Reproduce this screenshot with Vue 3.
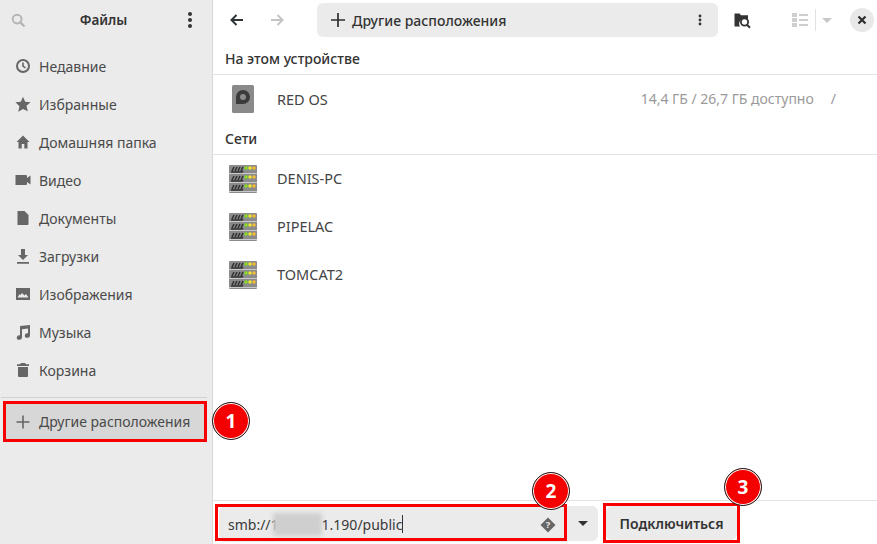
<script setup>
const places = [
  { name: 'Недавние', icon: 'clock' },
  { name: 'Избранные', icon: 'star' },
  { name: 'Домашняя папка', icon: 'home' },
  { name: 'Видео', icon: 'video' },
  { name: 'Документы', icon: 'doc' },
  { name: 'Загрузки', icon: 'down' },
  { name: 'Изображения', icon: 'image' },
  { name: 'Музыка', icon: 'music' },
  { name: 'Корзина', icon: 'trash' },
]
const servers = ['DENIS-PC', 'PIPELAC', 'TOMCAT2']
const bars = [0, 9, 18]
</script>

<template>
  <div class="win">
    <aside class="side">
      <div class="side-head">
        <svg class="s-search" width="15" height="15" viewBox="0 0 16 16"><circle cx="6.5" cy="6.5" r="4.7" fill="none" stroke="#b4b4b4" stroke-width="2"/><path d="M10 10l4.400 4.400" stroke="#b4b4b4" stroke-width="2.400"/></svg>
        <span class="side-title">Файлы</span>
        <svg class="s-menu" width="6" height="18" viewBox="0 0 6 18"><circle cx="3" cy="3" r="2" fill="#333"/><circle cx="3" cy="9" r="2" fill="#333"/><circle cx="3" cy="15" r="2" fill="#333"/></svg>
      </div>
      <ul class="places">
        <li v-for="p in places" :key="p.name" class="place">
          <svg class="ico" width="16" height="16" viewBox="0 0 16 16">
            <template v-if="p.icon === 'clock'"><circle cx="8" cy="8" r="6" fill="none" stroke="#666" stroke-width="2"/><path d="M8 4.500V8l2.500 2" fill="none" stroke="#666" stroke-width="1.600"/></template>
            <path v-else-if="p.icon === 'star'" d="M8 .8l2.200 5 5.400.5-4.100 3.500 1.300 5.400L8 12.900 3.200 15.700l1.300-5.400L.4 6.300l5.400-.5z" fill="#666"/>
            <path v-else-if="p.icon === 'home'" d="M8 1.500L1.500 8H3.500v6.500h3.200V10h2.600v4.500h3.200V8h2z" fill="#666"/>
            <path v-else-if="p.icon === 'video'" d="M0.500 3h10.500a1 1 0 0 1 1 1v2l3.500-2.500v9L12 10v2a1 1 0 0 1-1 1H0.500z" fill="#666"/>
            <path v-else-if="p.icon === 'doc'" d="M2.500 1h7l4 4v9a1 1 0 0 1-1 1h-10z" fill="#666"/>
            <path v-else-if="p.icon === 'down'" d="M6 1h4v6h3l-5 5-5-5h3zM2 14h12v1.700H2z" fill="#666"/>
            <path v-else-if="p.icon === 'image'" fill-rule="evenodd" d="M1 2h14v12H1zM2.500 11.500h11L11 8 9.500 9.500 7 7 5.500 9 4.500 8.200z" fill="#666"/>
            <path v-else-if="p.icon === 'music'" d="M5 2l10-1v10.500a2.600 2.300 0 1 1-2-2.200V4.500L7 5.200v8.300a2.600 2.300 0 1 1-2-2.200z" fill="#666"/>
            <path v-else d="M6 1h4l1 1.300h3V4H2V2.300h3zM3 5h10v9a1 1 0 0 1-1 1H4a1 1 0 0 1-1-1z" fill="#666"/>
          </svg>
          <span>{{ p.name }}</span>
        </li>
      </ul>
      <div class="side-sep"></div>
      <div class="place other">
        <svg class="ico" width="16" height="16" viewBox="0 0 16 16"><path d="M8 1.500v13M1.500 8h13" stroke="#666" stroke-width="1.600"/></svg>
        <span class="other-text">Другие расположения</span>
        <b class="mark red-box box-other"></b>
        <b class="num n1">1</b>
      </div>
    </aside>

    <main class="main">
      <header class="top">
        <svg class="arrow" width="16" height="16" viewBox="0 0 16 16"><path d="M14 8H3M7.500 3L2.500 8l5 5" fill="none" stroke="#2e3436" stroke-width="2"/></svg>
        <svg class="arrow fwd" width="16" height="16" viewBox="0 0 16 16"><path d="M2 8h11M8.500 3l5 5-5 5" fill="none" stroke="#c4c4c4" stroke-width="2"/></svg>
        <div class="path">
          <svg width="16" height="16" viewBox="0 0 16 16"><path d="M8 1v14M1 8h14" stroke="#2e2e2e" stroke-width="1.700"/></svg>
          <span class="path-text">Другие расположения</span>
          <svg class="path-menu" width="4" height="12" viewBox="0 0 4 12"><circle cx="2" cy="2" r="1.400" fill="#333"/><circle cx="2" cy="6" r="1.400" fill="#333"/><circle cx="2" cy="10" r="1.400" fill="#333"/></svg>
        </div>
        <svg class="find" width="17" height="17" viewBox="0 0 17 17"><path d="M0.500 1.500h5l1.500 1.800h7v4a5.500 5.500 0 0 0-8 7.200H.5z" fill="#333"/><circle cx="10.500" cy="10" r="3.600" fill="none" stroke="#333" stroke-width="1.800"/><path d="M13 12.700l3 3" stroke="#333" stroke-width="2"/></svg>
        <svg class="list" width="16" height="14" viewBox="0 0 16 14"><path d="M0 0h5v4H0zM0 5h5v4H0zM0 10h5v4H0zM7 1h9v2H7zM7 6h9v2H7zM7 11h9v2H7z" fill="#cfcfcf"/></svg>
        <i class="v-sep"></i>
        <svg class="drop" width="10" height="5" viewBox="0 0 10 5"><path d="M0 0h10L5 5z" fill="#c8c8c8"/></svg>
        <span class="close"><svg width="10" height="10" viewBox="0 0 10 10"><path d="M1.500 1.500l7 7M8.500 1.500l-7 7" stroke="#2e2e2e" stroke-width="2.200"/></svg></span>
      </header>

      <div class="content">
        <h2 class="sec first">На этом устройстве</h2>
        <div class="row device">
          <svg class="dev-ico" width="22" height="28" viewBox="0 0 22 28">
            <rect x="0" y="0" width="22" height="28" rx="1.500" fill="#8a8a8a"/>
            <path d="M4 12a7 7 0 1 1 7 7H4z" fill="#3b3b3b"/>
            <circle cx="11" cy="12" r="3" fill="#8c8c8c"/>
          </svg>
          <span class="name">RED OS</span>
          <span class="free">14,4 ГБ / 26,7 ГБ доступно</span>
          <span class="mount">/</span>
        </div>
        <h2 class="sec">Сети</h2>
        <div v-for="s in servers" :key="s" class="row server">
          <svg class="srv-ico" width="28" height="28" viewBox="0 0 28 28">
            <rect width="28" height="28" rx="1" fill="#8b8b8b"/>
            <g v-for="y in bars" :key="y">
              <path :d="`M2 ${y + 7}h11l1-1M3 ${y + 6}l2-4M6 ${y + 6}l2-4M9 ${y + 6}l2-4M12 ${y + 6}l2-4`" fill="none" stroke="#333" stroke-width="1.600"/>
              <circle cx="17" :cy="y + 3" r="1.700" fill="#86e01e"/>
              <circle cx="21" :cy="y + 3" r="1.700" fill="#f0ea2e"/>
              <circle cx="25" :cy="y + 3" r="1.700" fill="#f5bb32"/>
              <path :d="`M0 ${y + 8.500}h28`" stroke="#c9c9c9" stroke-width="1"/>
            </g>
          </svg>
          <span class="name">{{ s }}</span>
        </div>
      </div>

      <footer class="bottom">
        <div class="entry">
          <span class="smb">smb://1</span><span class="blur"></span><span class="smb">1.190/public</span><i class="caret"></i>
          <svg class="hint" width="16" height="16" viewBox="0 0 17 17"><path d="M8.500 0.500l8 8-8 8-8-8z" fill="#666"/><text x="8.500" y="12" text-anchor="middle" class="q">?</text></svg>
          <b class="mark red-box box-entry"></b>
          <b class="num n2">2</b>
        </div>
        <div class="more"><svg width="10" height="5" viewBox="0 0 10 5"><path d="M0 0h10L5 5z" fill="#333"/></svg></div>
        <button class="connect">Подключиться<b class="mark red-box box-btn"></b><b class="num n3">3</b></button>
      </footer>
    </main>
  </div>
</template>

<style>
html, body { margin: 0; background: #fff; }
</style>

<style scoped>
.win { width: 877px; height: 544px; display: flex; overflow: hidden; background: #fff; font-family: "Noto Sans", "Open Sans", sans-serif; font-size: 14px; color: #3a3a3a; }
.side { width: 212px; flex: none; background: #ebebeb; border-right: 1px solid #d8d8d8; display: flex; flex-direction: column; }
.side-head { height: 38px; display: flex; align-items: center; justify-content: center; position: relative; padding: 2px 5px 0 0; box-sizing: border-box; }
.side-title { font-weight: 600; font-size: 13.500px; color: #333; }
.s-search { position: absolute; left: 11px; top: 13px; }
.s-menu { position: absolute; left: 187px; top: 11px; }
.places { list-style: none; margin: 9px 0 0; padding: 0; }
.place { height: 38px; display: flex; align-items: center; gap: 8px; padding-left: 15px; color: #4a4a4a; position: relative; }
.side-sep { height: 1px; margin: 8px 5px 5px 1px; background: #d2d2d2; }
.other { margin: 0 8px 0 5px; padding-left: 10px; background: #d7d7d7; }
.other-text { margin-bottom: 2px; }
.ico { flex: none; }
.mark { position: absolute; pointer-events: none; }
.red-box { border: 3px solid #f80000; box-sizing: border-box; }
.box-other { left: -2px; top: -2px; right: -3px; bottom: -1px; }
.num { position: absolute; width: 38px; height: 38px; box-sizing: border-box; border-radius: 50%; background: #f40000; border: 1px solid #222; box-shadow: inset 0 0 0 1px #fff; color: #fff; font-size: 19px; font-weight: 700; display: flex; align-items: center; justify-content: center; z-index: 3; }
.n1 { left: 207px; top: -1px; }
.main { flex: 1; min-width: 0; display: flex; flex-direction: column; }
.top { height: 40px; display: flex; align-items: center; flex: none; }
.arrow { margin-left: 16px; }
.fwd { margin-left: 24px; }
.path { width: 401px; height: 34px; margin-left: 32px; background: #ebebeb; border-radius: 6px; display: flex; align-items: center; box-sizing: border-box; padding-left: 13px; }
.path-text { margin-left: 6px; font-weight: 500; color: #333; }
.path-menu { margin-left: auto; margin-right: 16px; }
.find { margin-left: 16px; }
.list { margin-left: 41px; }
.v-sep { width: 1px; height: 22px; background: #e2e2e2; margin-left: 7px; }
.drop { margin-left: 6px; }
.close { width: 24px; height: 24px; border-radius: 50%; background: #e8e8e8; margin-left: 18px; display: flex; align-items: center; justify-content: center; }
.content { flex: 1; }
.sec { margin: 0; height: 31px; box-sizing: border-box; padding: 5px 0 0 12px; line-height: 20px; font-size: 14px; font-weight: 500; color: #333; border-bottom: 1px solid #e3e3e3; }
.sec.first { height: 35px; padding-top: 9px; }
.row { display: flex; align-items: center; position: relative; padding-left: 64px; color: #444; }
.device { height: 49px; box-sizing: border-box; padding-bottom: 2px; }
.server { height: 48px; box-sizing: border-box; padding-bottom: 2px; }
.dev-ico { position: absolute; left: 19px; top: 10px; }
.srv-ico { position: absolute; left: 16px; top: 10px; }
.name { font-size: 14.500px; }
.free { margin-left: auto; color: #9a9a9a; }
.mount { margin: 0 41px 0 17px; color: #9a9a9a; }
.bottom { height: 44px; flex: none; border-top: 1px solid #e2e2e2; display: flex; align-items: flex-start; padding-top: 5px; box-sizing: border-box; }
.entry { position: relative; margin-left: 6px; width: 348px; height: 36px; background: #ebebeb; border-radius: 6px 0 0 6px; display: flex; align-items: center; padding-left: 9px; box-sizing: border-box; color: #3a3a3a; }
.blur { width: 49px; height: 23px; margin-left: -6px; background: #cfcfcf; filter: blur(2px); }
.caret { width: 1px; height: 18px; background: #333; }
.hint { position: absolute; right: 11px; top: 11px; }
.q { font: 700 10px "Noto Sans", sans-serif; fill: #ebebeb; }
.box-entry { left: -4px; top: -2px; right: 0; bottom: 1px; }
.n2 { left: 313px; top: -34px; }
.more { width: 31px; height: 35px; background: #ebebeb; border-radius: 0 6px 6px 0; display: flex; align-items: center; justify-content: center; }
.connect { position: relative; margin-left: 8px; width: 131px; height: 34px; background: #ebebeb; border: 0; border-radius: 6px; font: 600 14px "Noto Sans", sans-serif; color: #333; padding: 0; }
.box-btn { left: -3px; top: -3px; right: -3px; bottom: -3px; }
.n3 { left: 118px; top: -38px; }
</style>
